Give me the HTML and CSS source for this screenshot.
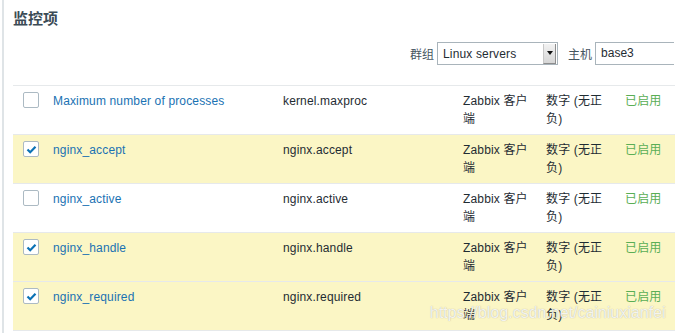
FILE: index.html
```html
<!DOCTYPE html>
<html lang="zh">
<head>
    <meta charset="UTF-8">
    <title>监控项</title>
    <link rel="stylesheet" href="styles.css">
</head>
<body>
    <div class="page">
        <h1 class="title">监控项</h1>
        <div class="filter">
            <label class="filter-label">群组</label>
            <div class="select">
                <span class="select-text">Linux servers</span>
                <span class="select-btn"><span class="arrow"></span></span>
            </div>
            <label class="filter-label host-label">主机</label>
            <div class="text-input">base3</div>
        </div>
        <table class="items">
            <colgroup>
                <col class="c-check">
                <col class="c-name">
                <col class="c-key">
                <col class="c-type">
                <col class="c-value">
                <col class="c-status">
            </colgroup>
            <tbody>
                <tr>
                    <td class="cell-check"><span class="check"></span></td>
                    <td><a class="link">Maximum number of processes</a></td>
                    <td>kernel.maxproc</td>
                    <td>Zabbix 客户端</td>
                    <td>数字 (无正负)</td>
                    <td class="status">已启用</td>
                </tr>
                <tr class="selected">
                    <td class="cell-check"><span class="check on"><svg width="11" height="9" viewBox="0 0 11 9"><path d="M1.5 4.5 L4.2 7.2 L9.5 1.8" fill="none" stroke="#0b72b5" stroke-width="2.2"/></svg></span></td>
                    <td><a class="link">nginx_accept</a></td>
                    <td>nginx.accept</td>
                    <td>Zabbix 客户端</td>
                    <td>数字 (无正负)</td>
                    <td class="status">已启用</td>
                </tr>
                <tr>
                    <td class="cell-check"><span class="check"></span></td>
                    <td><a class="link">nginx_active</a></td>
                    <td>nginx.active</td>
                    <td>Zabbix 客户端</td>
                    <td>数字 (无正负)</td>
                    <td class="status">已启用</td>
                </tr>
                <tr class="selected">
                    <td class="cell-check"><span class="check on"><svg width="11" height="9" viewBox="0 0 11 9"><path d="M1.5 4.5 L4.2 7.2 L9.5 1.8" fill="none" stroke="#0b72b5" stroke-width="2.2"/></svg></span></td>
                    <td><a class="link">nginx_handle</a></td>
                    <td>nginx.handle</td>
                    <td>Zabbix 客户端</td>
                    <td>数字 (无正负)</td>
                    <td class="status">已启用</td>
                </tr>
                <tr class="selected">
                    <td class="cell-check"><span class="check on"><svg width="11" height="9" viewBox="0 0 11 9"><path d="M1.5 4.5 L4.2 7.2 L9.5 1.8" fill="none" stroke="#0b72b5" stroke-width="2.2"/></svg></span></td>
                    <td><a class="link">nginx_required</a></td>
                    <td>nginx.required</td>
                    <td>Zabbix 客户端</td>
                    <td>数字 (无正负)</td>
                    <td class="status">已启用</td>
                </tr>
            </tbody>
        </table>
        <div class="watermark">https://blog.csdn.net/cainiuxianfei</div>
    </div>
</body>
</html>
```
FILE: styles.css
```css
html, body {
    margin: 0;
    padding: 0;
    background: #fff;
    overflow: hidden;
}

body {
    font-family: "Liberation Sans", Arial, "Noto Sans CJK SC", sans-serif;
    font-size: 12px;
    color: #1f2c33;
}

.page {
    position: relative;
    margin-left: 2px;
    border-left: 2px solid #dfe4e7;
    padding-left: 9px;
    height: 333px;
    overflow: hidden;
}

.title {
    margin: 0;
    padding-top: 10px;
    font-size: 15px;
    line-height: 18px;
    font-weight: bold;
    color: #3b4b56;
}

.filter {
    display: flex;
    align-items: center;
    margin-top: 14px;
    padding-left: 397px;
    height: 23px;
}

.filter-label {
    margin-right: 3px;
    color: #46555f;
}

.host-label {
    margin-left: 10px;
}

.select {
    display: flex;
    align-items: center;
    box-sizing: border-box;
    width: 121px;
    height: 23px;
    border: 1px solid #a9b4bb;
    background: #fff;
}

.select-text {
    flex: 1;
    padding-left: 5px;
    color: #1f2c33;
    letter-spacing: 0.15px;
}

.select-btn {
    display: flex;
    align-items: center;
    justify-content: center;
    width: 11px;
    height: 19px;
    margin-right: 1px;
    background: linear-gradient(#f2f2f2, #d6d6d6);
    border-left: 1px solid #c8c8c8;
    border-right: 1px solid #8d8d8d;
    border-bottom: 1px solid #8d8d8d;
}

.arrow {
    width: 0;
    height: 0;
    border-left: 3px solid transparent;
    border-right: 3px solid transparent;
    border-top: 4px solid #111;
}

.text-input {
    box-sizing: border-box;
    width: 79px;
    height: 23px;
    line-height: 21px;
    padding-left: 5px;
    border: 1px solid #a9b4bb;
    border-right: none;
}

.items {
    margin-top: 20px;
    border-collapse: collapse;
    table-layout: fixed;
    width: 100%;
    letter-spacing: 0.15px;
}

.c-check { width: 40px; }
.c-name { width: 230px; }
.c-key { width: 180px; }
.c-type { width: 83px; }
.c-value { width: 79px; }

.items tr {
    border-top: 1px solid #e6e9eb;
    border-bottom: 1px solid #e6e9eb;
}

.items tr.selected {
    background: #fbf6c5;
}

.items td {
    padding: 6px 12px 6px 0;
    line-height: 18px;
    height: 36px;
    vertical-align: top;
    word-break: break-all;
}

.items td.cell-check {
    padding-left: 10px;
    padding-top: 6px;
}

.check {
    display: flex;
    align-items: center;
    justify-content: center;
    box-sizing: border-box;
    width: 16px;
    height: 16px;
    border: 1px solid #acbac3;
    border-radius: 2px;
    background: #fff;
}

.link {
    color: #1a72b3;
    cursor: pointer;
}

.status {
    color: #5aae55;
}

.watermark {
    position: absolute;
    left: 426px;
    top: 304px;
    font-size: 16px;
    color: rgba(255, 255, 255, 0.85);
    text-shadow: 0 0 1px rgba(120, 120, 120, 0.6);
}
```
